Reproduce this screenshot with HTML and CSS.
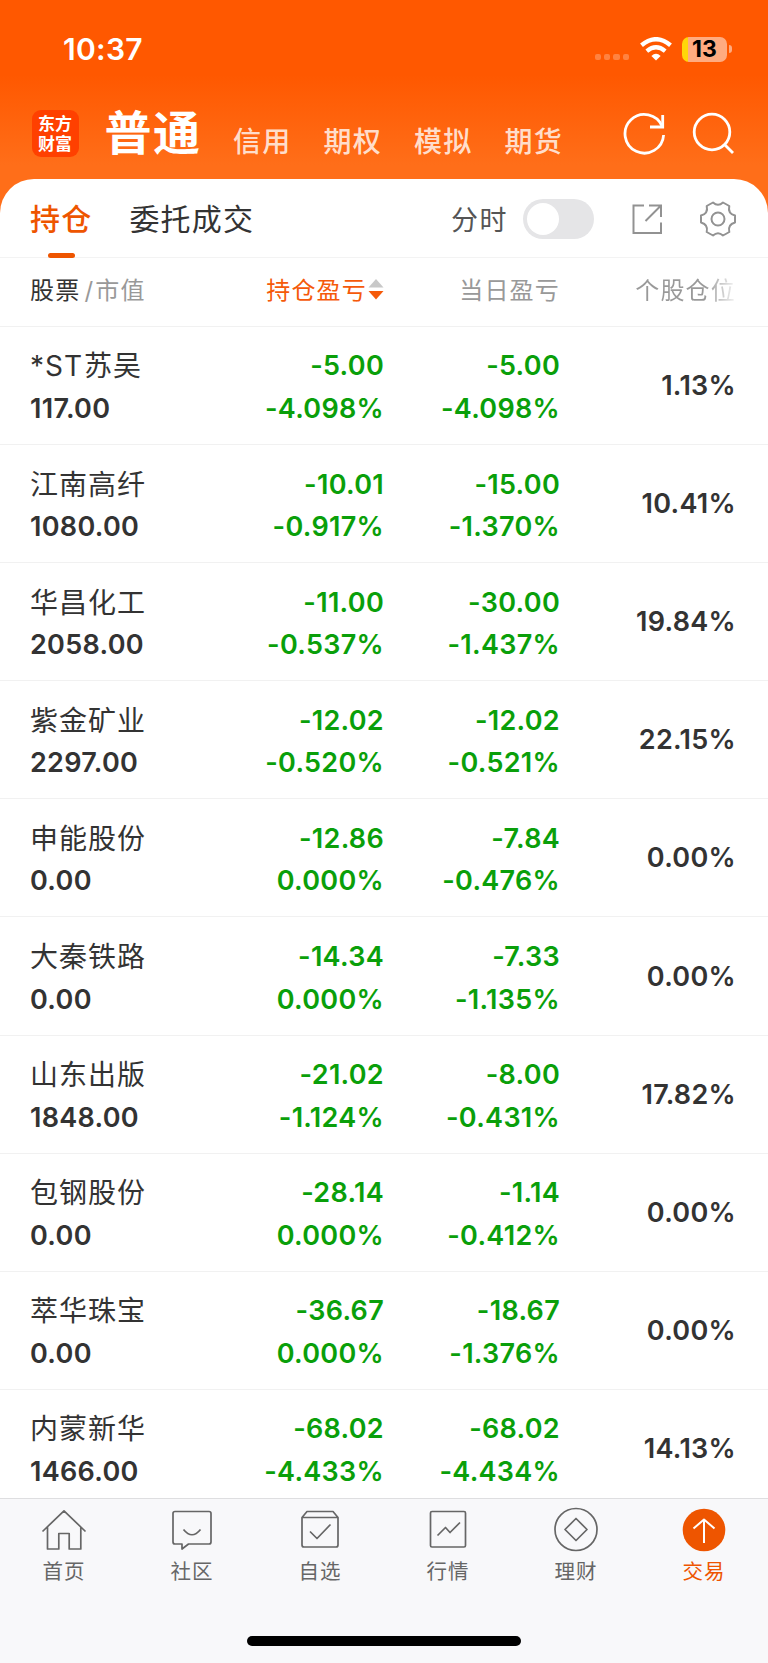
FILE: index.html
```html
<!doctype html>
<html lang="zh-CN">
  <head>
    <meta charset="UTF-8" />
    <meta name="viewport" content="width=device-width, initial-scale=1.0" />
    <title>持仓</title>
    <link rel="stylesheet" href="styles.css">
  </head>
  <body>
    <header class="header">
      <div class="status">
        <span class="time">10:37</span>
        <div class="signal"><i></i><i></i><i></i><i></i></div>
        <svg class="wifi" width="32" height="24" viewBox="0 0 32 24">
          <path d="M1.500 8.200Q16-3.800 30.500 8.200" fill="none" stroke="#fff" stroke-width="4.400" />
          <path d="M6.800 14.200Q16 6.400 25.200 14.200" fill="none" stroke="#fff" stroke-width="4.200" />
          <path d="M16 23.500l-4.600-4.600Q16 14.800 20.600 18.900z" fill="#fff" />
        </svg>
        <div class="battery"><span>13</span></div>
        <i class="battery-cap"></i>
      </div>
      <div class="accounts">
        <div class="logo">东方<br>财富</div>
        <span class="account active">普通</span>
        <span class="account">信用</span>
        <span class="account">期权</span>
        <span class="account">模拟</span>
        <span class="account">期货</span>
        <svg class="refresh" width="44" height="44" viewBox="0 0 44 44" fill="none" stroke="#fff" stroke-width="2.800">
          <path d="M40.600 23A19.300 19.300 0 1 1 39.200 14.500" />
          <path d="M39.700 3V15H27" />
        </svg>
        <svg class="search" width="44" height="44" viewBox="0 0 44 44" fill="none" stroke="#fff" stroke-width="2.800">
          <circle cx="21" cy="20" r="17.800" />
          <path d="M33.500 32.500L42 41" />
        </svg>
      </div>
    </header>

    <main class="panel">
      <nav class="tabs">
        <span class="tab active">持仓</span>
        <span class="tab">委托成交</span>
        <span class="switch-label">分时</span>
        <span class="switch"></span>
        <svg class="export" width="32" height="32" viewBox="0 0 32 32" fill="none" stroke="#929292" stroke-width="2">
          <path d="M13 2.500H2.500V30H30V19.500" />
          <path d="M18 2.500H30V14M30 2.500L14.500 18" />
        </svg>
        <svg class="gear" width="38" height="38" viewBox="0 0 38 38" fill="none" stroke="#929292" stroke-width="2" stroke-linejoin="round">
          <path d="M14 2.500Q19 7 24 2.500L30.300 6Q28.500 13.500 36 15.500V22.500Q28.500 24.500 30.300 32L24 35.500Q19 31 14 35.500L7.700 32Q9.500 24.500 2 22.500V15.500Q9.500 13.500 7.700 6Z" />
          <circle cx="19" cy="19" r="6.500" />
        </svg>
      </nav>

      <div class="row head">
        <span class="dark">股票<em><i>/</i>市值</em></span>
        <span class="sorted">持仓盈亏<svg width="16" height="24" viewBox="0 0 16 24"><path d="M8 2L15.500 10.500H.5z" fill="#c8c8c8" /><path d="M8 22.500L15.500 14H.5z" fill="#f55a0a" /></svg></span>
        <span>当日盈亏</span>
        <span class="faded">个股仓位</span>
      </div>

      <div class="list">
        <div class="row">
          <div class="stock"><span>*ST 苏吴</span><b>117.00</b></div>
          <div class="profit"><b>-5.00</b><b>-4.098%</b></div>
          <div class="profit"><b>-5.00</b><b>-4.098%</b></div>
          <b class="share">1.13%</b>
        </div>
        <div class="row">
          <div class="stock"><span>江南高纤</span><b>1080.00</b></div>
          <div class="profit"><b>-10.01</b><b>-0.917%</b></div>
          <div class="profit"><b>-15.00</b><b>-1.370%</b></div>
          <b class="share">10.41%</b>
        </div>
        <div class="row">
          <div class="stock"><span>华昌化工</span><b>2058.00</b></div>
          <div class="profit"><b>-11.00</b><b>-0.537%</b></div>
          <div class="profit"><b>-30.00</b><b>-1.437%</b></div>
          <b class="share">19.84%</b>
        </div>
        <div class="row">
          <div class="stock"><span>紫金矿业</span><b>2297.00</b></div>
          <div class="profit"><b>-12.02</b><b>-0.520%</b></div>
          <div class="profit"><b>-12.02</b><b>-0.521%</b></div>
          <b class="share">22.15%</b>
        </div>
        <div class="row">
          <div class="stock"><span>申能股份</span><b>0.00</b></div>
          <div class="profit"><b>-12.86</b><b>0.000%</b></div>
          <div class="profit"><b>-7.84</b><b>-0.476%</b></div>
          <b class="share">0.00%</b>
        </div>
        <div class="row">
          <div class="stock"><span>大秦铁路</span><b>0.00</b></div>
          <div class="profit"><b>-14.34</b><b>0.000%</b></div>
          <div class="profit"><b>-7.33</b><b>-1.135%</b></div>
          <b class="share">0.00%</b>
        </div>
        <div class="row">
          <div class="stock"><span>山东出版</span><b>1848.00</b></div>
          <div class="profit"><b>-21.02</b><b>-1.124%</b></div>
          <div class="profit"><b>-8.00</b><b>-0.431%</b></div>
          <b class="share">17.82%</b>
        </div>
        <div class="row">
          <div class="stock"><span>包钢股份</span><b>0.00</b></div>
          <div class="profit"><b>-28.14</b><b>0.000%</b></div>
          <div class="profit"><b>-1.14</b><b>-0.412%</b></div>
          <b class="share">0.00%</b>
        </div>
        <div class="row">
          <div class="stock"><span>萃华珠宝</span><b>0.00</b></div>
          <div class="profit"><b>-36.67</b><b>0.000%</b></div>
          <div class="profit"><b>-18.67</b><b>-1.376%</b></div>
          <b class="share">0.00%</b>
        </div>
        <div class="row">
          <div class="stock"><span>内蒙新华</span><b>1466.00</b></div>
          <div class="profit"><b>-68.02</b><b>-4.433%</b></div>
          <div class="profit"><b>-68.02</b><b>-4.434%</b></div>
          <b class="share">14.13%</b>
        </div>
      </div>
    </main>

    <footer class="footer">
      <nav class="menu">
        <a class="item">
          <svg width="48" height="48" viewBox="0 0 48 48"><path d="M2.500 24.500L24 3.800L45.500 24.500M7.500 20V42H18.800V26.500H29.200V42H40.800V20" /></svg>
          <span>首页</span>
        </a>
        <a class="item">
          <svg width="48" height="48" viewBox="0 0 48 48"><path d="M7 4.500H41Q43 4.500 43 6.500V35Q43 37 41 37H20.500L14 42V37H7Q5 37 5 35V6.500Q5 4.500 7 4.500ZM15.500 22.500Q24 33 32.500 22.500" /></svg>
          <span>社区</span>
        </a>
        <a class="item">
          <svg width="48" height="48" viewBox="0 0 48 48"><path d="M6 10.500V38Q6 40 8 40H40Q42 40 42 38V10.500L37 4.500H11ZM6 10.500H42M14 24.500L21 31.500L34.500 17.500" /></svg>
          <span>自选</span>
        </a>
        <a class="item">
          <svg width="48" height="48" viewBox="0 0 48 48"><rect x="6.500" y="4.500" width="35" height="35.500" rx="1.500" /><path d="M13.500 28.500L21.500 20.500L26 25.500L36 15.500" /></svg>
          <span>行情</span>
        </a>
        <a class="item">
          <svg width="48" height="48" viewBox="0 0 48 48"><circle cx="24" cy="22.500" r="21" /><path d="M24 11.500L35 22.500L24 33.500L13 22.500Z" /></svg>
          <span>理财</span>
        </a>
        <a class="item active">
          <svg width="48" height="48" viewBox="0 0 48 48"><circle class="disc" cx="24" cy="23" r="21.300" /><path class="arrow" d="M24 36V13M13.500 21.500L24 12.500L34.500 21.500" /></svg>
          <span>交易</span>
        </a>
      </nav>
      <div class="home-bar"></div>
    </footer>
  </body>
</html>
```
FILE: styles.css
```css
* {
  box-sizing: border-box;
}
body {
  margin: 0;
  width: 768px;
  height: 1663px;
  overflow: hidden;
  display: flex;
  flex-direction: column;
  background: #ff6e19;
  font-family: Inter, "Noto Sans CJK SC", sans-serif;
  color: #333;
}
svg {
  display: block;
  flex: none;
}

/* header */
.header {
  height: 179px;
  flex: none;
  background: linear-gradient(#ff5800 75px, #ff6e19 165px);
  color: #fff;
}
.status {
  display: flex;
  align-items: center;
  height: 98px;
  padding: 0 36px 0 63px;
}
.time {
  font-size: 30px;
  font-weight: 600;
  letter-spacing: 0.300px;
  margin-right: auto;
}
.signal {
  display: flex;
  gap: 3px;
  margin: 16px 11px 0 0;
}
.signal i {
  width: 6.300px;
  height: 6px;
  border-radius: 2px;
  background: rgba(255, 255, 255, 0.25);
}
.wifi {
  margin-right: 10px;
}
.battery {
  width: 45px;
  height: 25px;
  border-radius: 7px;
  background: linear-gradient(90deg, #ffd60a 6px, #ffab80 6px);
  color: #000;
  font-size: 23px;
  font-weight: 700;
  line-height: 25px;
  text-align: center;
}
.battery-cap {
  width: 3px;
  height: 8px;
  margin-left: 2px;
  border-radius: 0 3px 3px 0;
  background: #ffab80;
}
.accounts {
  display: flex;
  align-items: flex-start;
  padding: 0 33px 0 31.500px;
}
.logo {
  width: 47px;
  height: 47px;
  margin: 12px 26px 0 0;
  padding-top: 4px;
  border-radius: 9px;
  background: #ff4000;
  font-size: 17px;
  font-weight: 700;
  line-height: 20px;
  text-align: center;
}
.account {
  margin-top: 24px;
  width: 90.500px;
  font-size: 28px;
  font-weight: 500;
  letter-spacing: 1.300px;
  line-height: 40px;
  color: rgba(255, 255, 255, 0.8);
}
.account.active {
  margin-top: 5px;
  width: 128.500px;
  font-size: 47px;
  font-weight: 700;
  letter-spacing: 1.500px;
  line-height: 60px;
  color: #fff;
}
.refresh {
  margin: 14px 24px 0 auto;
}
.search {
  margin-top: 14px;
}

/* tabs */
.panel {
  height: 1319px;
  flex: none;
  overflow: hidden;
  border-radius: 34px 34px 0 0;
  background: #fff;
}
.tabs {
  display: flex;
  align-items: center;
  height: 79px;
  padding: 1px 31px 0 30px;
  border-bottom: 1px solid #f3f3f3;
}
.tab {
  position: relative;
  margin-right: 37px;
  font-size: 30px;
  letter-spacing: 1.200px;
  line-height: 78px;
}
.tab.active {
  color: #ee5500;
  font-weight: 500;
}
.tab.active::after {
  content: "";
  position: absolute;
  left: 17.500px;
  bottom: 0;
  width: 27px;
  height: 5px;
  border-radius: 3px;
  background: #ee5500;
}
.switch-label {
  margin: 0 15px 0 auto;
  font-size: 27px;
  letter-spacing: 1.500px;
  color: #555;
}
.switch {
  width: 71px;
  height: 40px;
  margin-right: 37px;
  padding: 4px;
  border-radius: 20px;
  background: #e5e5e7;
}
.switch::before {
  content: "";
  display: block;
  width: 32px;
  height: 32px;
  border-radius: 50%;
  background: #fff;
}
.export {
  margin-right: 36px;
}

/* holdings */
.row {
  display: grid;
  grid-template-columns: 178px 176px 176px 176px;
  align-items: center;
  height: 118.100px;
  padding: 0 0 0 30px;
  border-bottom: 1px solid #f1f1f1;
  text-align: right;
}
.head {
  height: 69px;
  padding-bottom: 7px;
  font-size: 24px;
  letter-spacing: 1.200px;
  color: #999;
}
.head .dark {
  color: #333;
  text-align: left;
}
.head em,
.head i {
  font-style: normal;
  color: #999;
}
.head i {
  margin: 0 1px 0 4px;
}
.sorted {
  display: flex;
  align-items: center;
  justify-content: flex-end;
  color: #f55a0a;
}
.sorted svg {
  margin-left: 1px;
}
.faded {
  background: linear-gradient(90deg, #999 145px, #f5f5f5);
  background-clip: text;
  color: transparent;
}
.stock,
.profit {
  display: flex;
  flex-direction: column;
  padding-top: 5px;
  font-size: 28px;
  line-height: 42.600px;
}
.stock {
  text-align: left;
}
.stock span {
  height: 42.600px;
  letter-spacing: 1px;
  word-spacing: -8px;
}
.row b {
  font-size: 27px;
  font-weight: 600;
  letter-spacing: 0.300px;
}
.profit {
  color: #0a9f0a;
}

/* bottom menu */
.footer {
  flex: 1;
  border-top: 1px solid #dedee0;
  background: #f8f8fa;
}
.menu {
  display: grid;
  grid-template-columns: repeat(6, 1fr);
  height: 137px;
  padding-top: 8px;
}
.item {
  display: flex;
  flex-direction: column;
  align-items: center;
  font-size: 20.500px;
  letter-spacing: 1px;
  line-height: 34px;
  color: #666;
}
.item svg {
  fill: none;
  stroke: #666;
  stroke-width: 1.700;
  stroke-linejoin: round;
}
.item.active {
  color: #ee5500;
}
.item .disc {
  fill: #ee5500;
  stroke: none;
}
.item .arrow {
  stroke: #fff;
  stroke-width: 2;
}
.home-bar {
  width: 274px;
  height: 10px;
  margin: 0 auto;
  border-radius: 5px;
  background: #000;
}
```
